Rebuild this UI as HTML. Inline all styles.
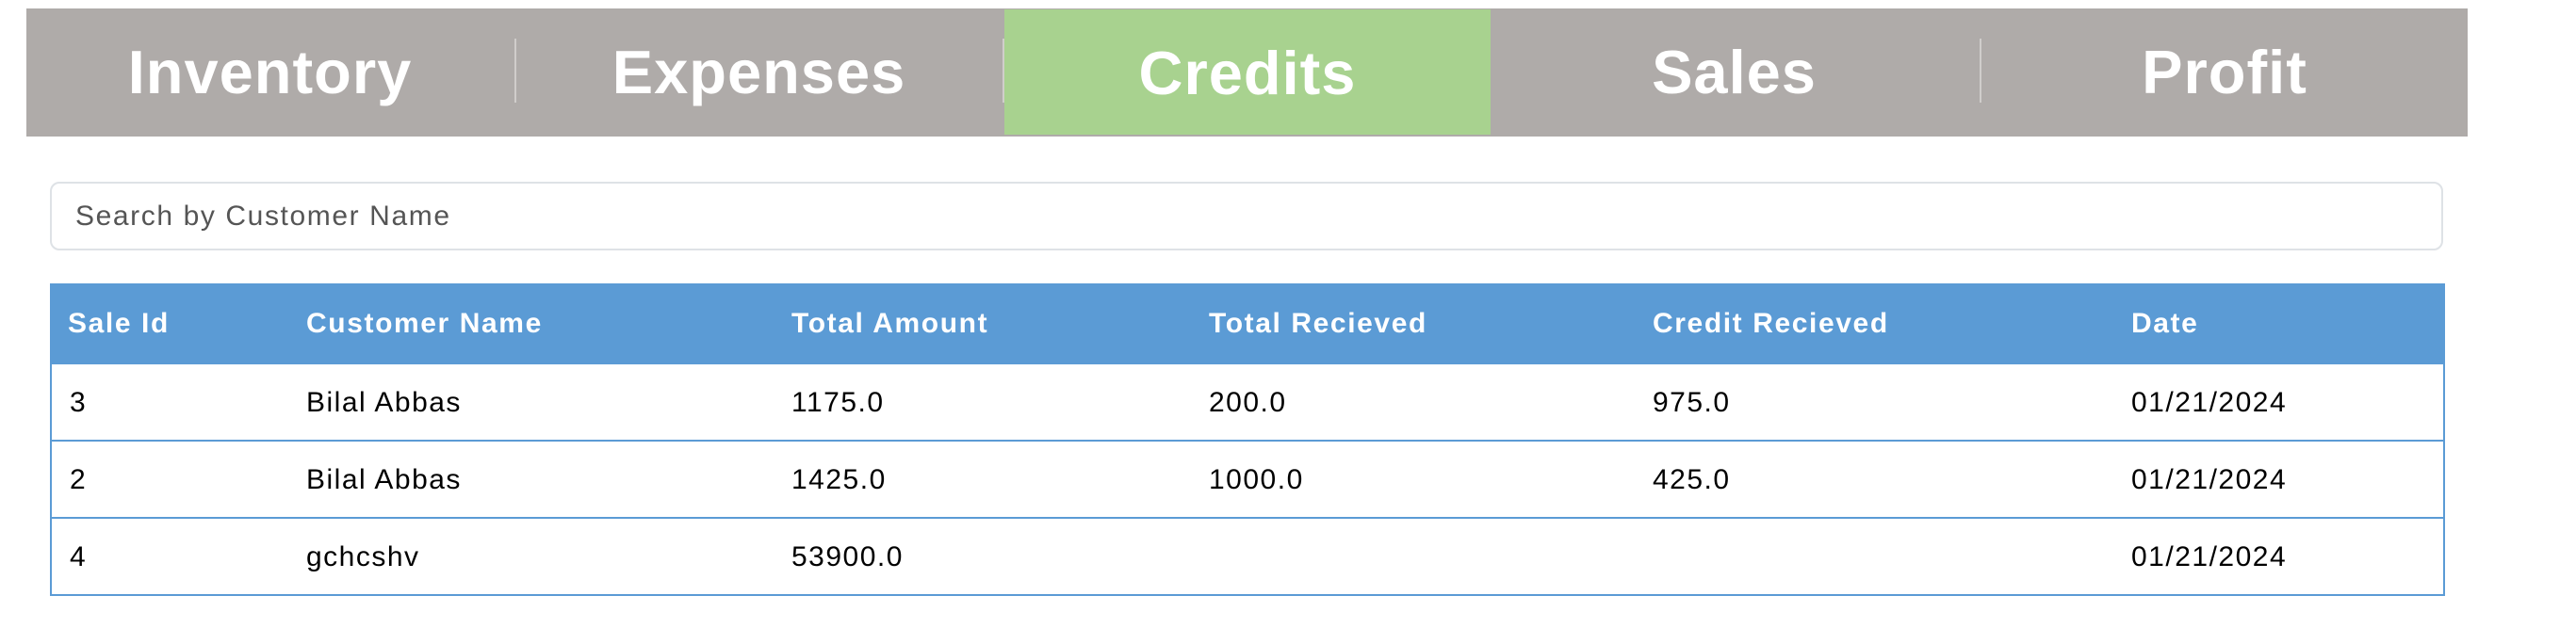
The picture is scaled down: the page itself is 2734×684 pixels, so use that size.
<!DOCTYPE html>
<html><head><style>
body{margin:0;width:2734px;height:684px;background:#fff;font-family:"Liberation Sans",Arial,sans-serif;position:relative;overflow:hidden}
.nav{position:absolute;left:28px;top:9px;width:2591px;height:136px;background:#afaba9}
.tab{position:absolute;top:0;height:136px;line-height:136px;text-align:center;color:#fff;font-weight:bold;font-size:65px;letter-spacing:1px}
.sep{position:absolute;top:32px;width:2px;height:68px;background:#d0cdcb}
.green{background:#a8d28f;top:1px;height:133px}
.search{position:absolute;left:53px;top:193px;width:2540px;height:73px;border:2px solid #dee2e6;border-radius:10px;box-sizing:border-box;font-size:30px;letter-spacing:1.6px;color:#555;line-height:70px;padding-left:25px}
.tbl{position:absolute;left:53px;top:301px;width:2542px}
.hd{height:86px;background:#5b9bd5;color:#fff;font-weight:bold;font-size:30px;letter-spacing:1.6px;position:relative}
.row{height:80px;border:2px solid #5b9bd5;border-top:none;position:relative;font-size:30px;letter-spacing:1.5px;color:#000}
.c{position:absolute;top:0;line-height:86px}
.row .c{line-height:82px}
</style></head><body>
<div class="nav">
<div class="tab" style="left:0;width:517px">Inventory</div>
<div class="sep" style="left:518px"></div>
<div class="tab" style="left:519px;width:517px">Expenses</div>
<div class="sep" style="left:1036px"></div>
<div class="tab green" style="left:1038px;width:516px">Credits</div>
<div class="tab" style="left:1554px;width:517px">Sales</div>
<div class="sep" style="left:2073px"></div>
<div class="tab" style="left:2075px;width:516px">Profit</div>
</div>
<div class="search">Search by Customer Name</div>
<div class="tbl">
<div class="hd"><span class="c" style="left:19px">Sale Id</span><span class="c" style="left:272px">Customer Name</span><span class="c" style="left:787px">Total Amount</span><span class="c" style="left:1230px">Total Recieved</span><span class="c" style="left:1701px">Credit Recieved</span><span class="c" style="left:2209px">Date</span></div>
<div class="row"><span class="c" style="left:19px">3</span><span class="c" style="left:270px">Bilal Abbas</span><span class="c" style="left:785px">1175.0</span><span class="c" style="left:1228px">200.0</span><span class="c" style="left:1699px">975.0</span><span class="c" style="left:2207px">01/21/2024</span></div>
<div class="row"><span class="c" style="left:19px">2</span><span class="c" style="left:270px">Bilal Abbas</span><span class="c" style="left:785px">1425.0</span><span class="c" style="left:1228px">1000.0</span><span class="c" style="left:1699px">425.0</span><span class="c" style="left:2207px">01/21/2024</span></div>
<div class="row"><span class="c" style="left:19px">4</span><span class="c" style="left:270px">gchcshv</span><span class="c" style="left:785px">53900.0</span><span class="c" style="left:2207px">01/21/2024</span></div>
</div>
</body></html>
